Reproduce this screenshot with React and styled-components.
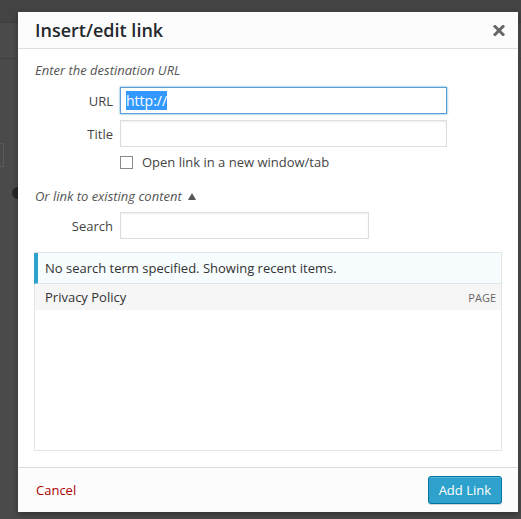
import styled, { createGlobalStyle } from 'styled-components';

const GlobalStyle = createGlobalStyle`
  html, body {
    margin: 0;
    padding: 0;
    background: #474747;
  }
  body {
    font-family: "Open Sans", "Liberation Sans", sans-serif;
    font-size: 13px;
    color: #444;
  }
`;

// Editor page behind the overlay (only its edges show)
const Backdrop = styled.div`
  position: relative;
  width: 521px;
  height: 519px;
  overflow: hidden;
  background: #4a4a4a;
`;

const AdminBar = styled.div`
  height: 22px;
  background: #434343;
  border-bottom: 1px solid #3b3b3b;
`;

const EditorToolbar = styled.div`
  height: 35px;
  background: #4a4a4a;
  border-bottom: 1px solid #3e3e3e;
`;

const EditorArea = styled.div`
  display: flex;
  flex-direction: column;
  align-items: flex-start;
  padding-top: 84px;
`;

const GhostField = styled.div`
  width: 3px;
  height: 22px;
  border: 1px solid #5a5a5a;
  border-left: none;
`;

const GhostDot = styled.div`
  width: 12px;
  height: 12px;
  margin: 20px 0 0 12px;
  border-radius: 50%;
  background: #262626;
`;

// Modal
const Modal = styled.div`
  position: absolute;
  top: 12px;
  left: 18px;
  width: 500px;
  height: 500px;
  display: flex;
  flex-direction: column;
  background: #fff;
  box-shadow: 0 3px 6px rgba(0, 0, 0, 0.3);
`;

const Header = styled.div`
  display: flex;
  align-items: center;
  justify-content: space-between;
  height: 36px;
  padding: 0 12px 0 17px;
  background: #fcfcfc;
  border-bottom: 1px solid #dddddd;
`;

const Title = styled.h1`
  margin: 0;
  font-size: 18px;
  font-weight: 600;
  line-height: 36px;
  color: #23282d;
`;

const CloseButton = styled.button`
  display: flex;
  align-items: center;
  justify-content: center;
  width: 14px;
  height: 14px;
  padding: 0;
  border: none;
  background: none;
  color: #666;
  cursor: pointer;
`;

const Body = styled.div`
  display: flex;
  flex-direction: column;
  padding: 0 16px;
`;

const Hint = styled.p`
  margin: ${p => p.$top}px 0 0 1px;
  font-style: italic;
  line-height: 20px;
  color: #555;
  display: flex;
  align-items: center;
  gap: 6px;
`;

const Row = styled.div`
  display: flex;
  align-items: center;
  margin-top: ${p => p.$top}px;
`;

const Label = styled.span`
  width: 79px;
  margin-right: 7px;
  text-align: right;
  color: #444;
`;

const Field = styled.div`
  box-sizing: border-box;
  width: ${p => p.$width}px;
  height: 27px;
  padding: 0 5px;
  display: flex;
  align-items: center;
  font-size: 14px;
  border: 1px solid ${p => (p.$focused ? '#5b9dd9' : '#dddddd')};
  box-shadow: ${p =>
    p.$focused
      ? '0 0 2px rgba(30, 140, 190, 0.8)'
      : 'inset 0 1px 2px rgba(0, 0, 0, 0.07)'};
  background: #fff;
`;

const Selected = styled.span`
  line-height: 19px;
  background: #3399ff;
  color: #fff;
`;

const CheckRow = styled.label`
  display: flex;
  align-items: center;
  gap: 9px;
  height: 22px;
  margin: 4px 0 0 86px;
  color: #444;
`;

const CheckBox = styled.span`
  box-sizing: border-box;
  width: 13px;
  height: 13px;
  border: 1px solid #8a8a8a;
  background: #fff;
`;

const Results = styled.div`
  display: flex;
  flex-direction: column;
  height: 199px;
  margin-top: 13px;
  box-sizing: border-box;
  border: 1px solid #e3e3e3;
`;

const Notice = styled.div`
  height: 30px;
  display: flex;
  align-items: center;
  margin-left: -1px;
  padding-left: 7px;
  border-left: 4px solid #2ea2cc;
  border-bottom: 1px solid #e3e3e3;
  background: #f7fcfe;
  color: #333;
`;

const Item = styled.div`
  height: 26px;
  display: flex;
  align-items: center;
  justify-content: space-between;
  padding: 0 5px 0 10px;
  background: #f6f6f6;
  color: #333;
`;

const ItemType = styled.span`
  font-size: 11px;
  text-transform: uppercase;
  color: #666;
`;

const Footer = styled.div`
  margin-top: auto;
  height: 44px;
  display: flex;
  align-items: center;
  justify-content: space-between;
  padding: 0 16px 0 18px;
  background: #fcfcfc;
  border-top: 1px solid #dddddd;
`;

const CancelLink = styled.a`
  color: #a00;
  text-decoration: none;
`;

const PrimaryButton = styled.button`
  box-sizing: border-box;
  height: 28px;
  padding: 0 10px;
  font-family: inherit;
  font-size: 13px;
  color: #fff;
  background: #2ea2cc;
  border: 1px solid #0074a2;
  border-radius: 3px;
  box-shadow: inset 0 1px 0 rgba(120, 200, 230, 0.5), 0 1px 0 rgba(0, 0, 0, 0.15);
  cursor: pointer;
`;

const CloseIcon = () => (
  <svg width="12" height="11" viewBox="0 0 12 11">
    <path d="M2 1.5 L10 9.5 M10 1.5 L2 9.5" stroke="currentColor" strokeWidth="3" strokeLinecap="square" />
  </svg>
);

const Caret = () => (
  <svg width="8" height="7" viewBox="0 0 8 7">
    <path d="M0 7 L4 0 L8 7 Z" fill="#555" />
  </svg>
);

export default function App() {
  return (
    <>
      <GlobalStyle />
      <Backdrop>
        <AdminBar />
        <EditorToolbar />
        <EditorArea>
          <GhostField />
          <GhostDot />
        </EditorArea>

        <Modal>
          <Header>
            <Title>Insert/edit link</Title>
            <CloseButton aria-label="Close">
              <CloseIcon />
            </CloseButton>
          </Header>

          <Body>
            <Hint $top={11}>Enter the destination URL</Hint>
            <Row $top={7}>
              <Label>URL</Label>
              <Field $width={327} $focused>
                <Selected>http://</Selected>
              </Field>
            </Row>
            <Row $top={6}>
              <Label>Title</Label>
              <Field $width={327} />
            </Row>
            <CheckRow>
              <CheckBox />
              Open link in a new window/tab
            </CheckRow>

            <Hint $top={13}>
              Or link to existing content <Caret />
            </Hint>
            <Row $top={6}>
              <Label>Search</Label>
              <Field $width={249} />
            </Row>

            <Results>
              <Notice>No search term specified. Showing recent items.</Notice>
              <Item>
                Privacy Policy
                <ItemType>Page</ItemType>
              </Item>
            </Results>
          </Body>

          <Footer>
            <CancelLink href="#">Cancel</CancelLink>
            <PrimaryButton>Add Link</PrimaryButton>
          </Footer>
        </Modal>
      </Backdrop>
    </>
  );
}
